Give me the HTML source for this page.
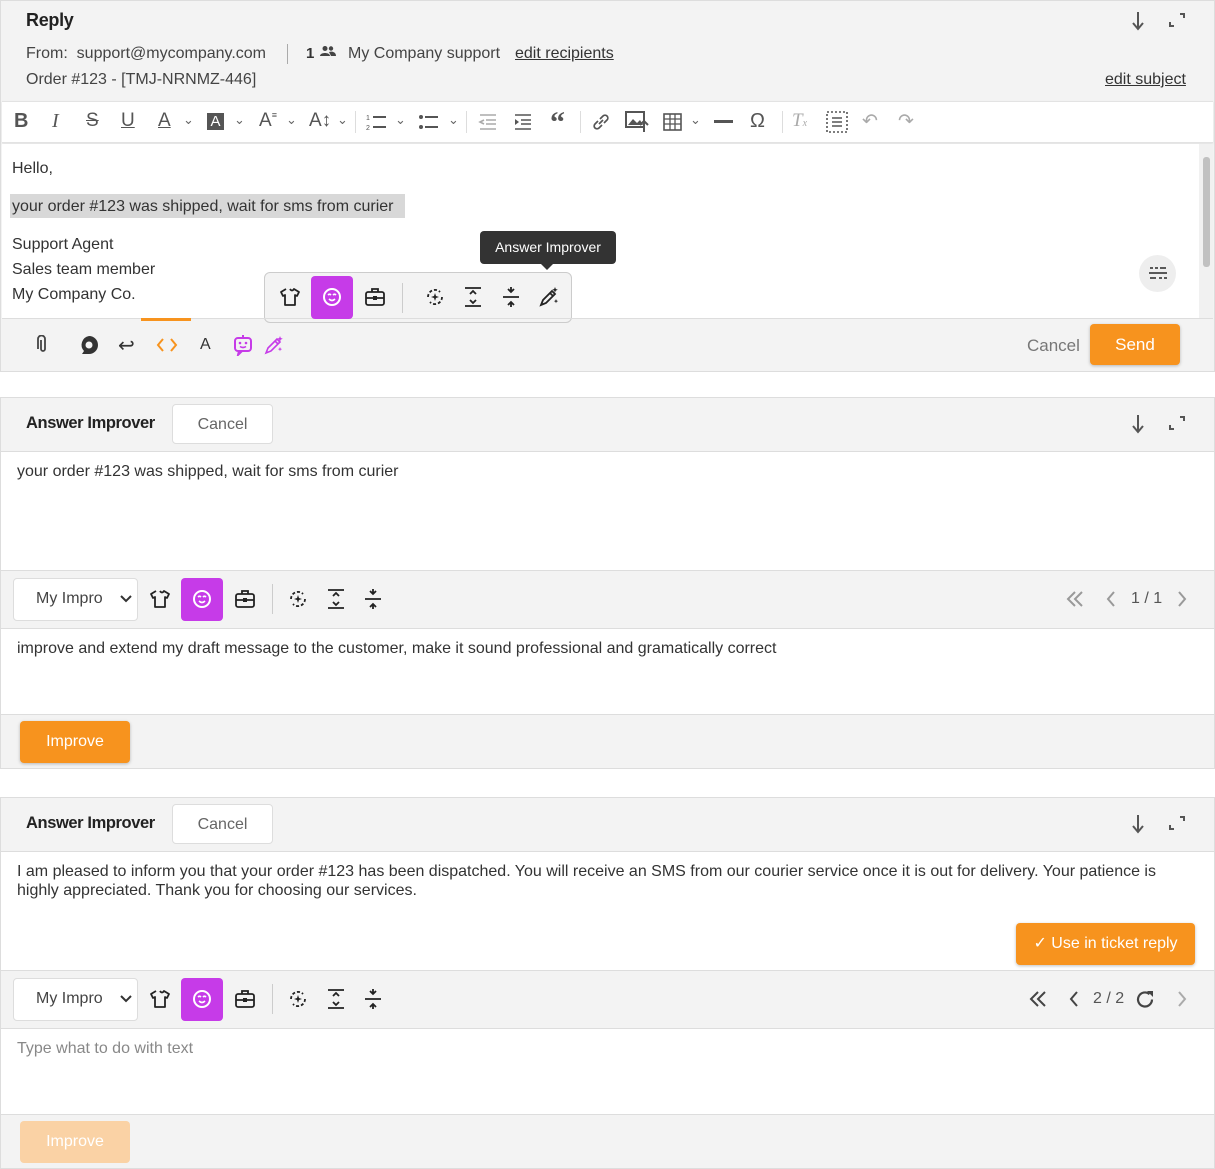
<!DOCTYPE html>
<html><head><meta charset="utf-8"><style>
*{box-sizing:border-box;margin:0;padding:0}
body{width:1215px;height:1169px;background:#fff;font-family:"Liberation Sans",Arial,sans-serif;color:#333;position:relative;overflow:hidden;font-size:16px}
.a{position:absolute}
.g{background:#f3f3f3}
.w{background:#fff}
.t{position:absolute;white-space:nowrap}
.btn{position:absolute;background:#f7931e;color:#fff;border-radius:4px;text-align:center;box-shadow:0 1px 3px rgba(0,0,0,.25)}
.ic{position:absolute}
svg{display:block}
.cb{position:absolute;background:#fff;border:1px solid #ddd;border-radius:4px;color:#666;text-align:center}
.ttl{font-size:16.5px;font-weight:bold;color:#222;letter-spacing:-0.4px}
</style></head><body>

<!-- PANEL 1 -->
<div class="a g" style="left:0;top:0;width:1215px;height:372px;border:1px solid #ddd"></div>
<div class="t" style="left:26px;top:10px;font-size:18px;font-weight:bold;color:#222;letter-spacing:-0.3px">Reply</div>
<div class="t" style="left:26px;top:45px;font-size:16px;color:#444">From:&nbsp; support@mycompany.com</div>
<div class="a" style="left:287px;top:44px;width:1px;height:20px;background:#aaa"></div>
<div class="t" style="left:306px;top:45px;font-size:15px;font-weight:bold;color:#333">1</div>
<svg class="ic" style="left:320px;top:45px" width="16" height="12" viewBox="0 0 16 12"><circle cx="5" cy="3.5" r="2.5" fill="#444"/><circle cx="11" cy="3.5" r="2.2" fill="#444"/><path d="M0 11c0-4 10-4 10 0z M9 7c3-1 7 0 7 4h-5z" fill="#444"/></svg>
<div class="t" style="left:348px;top:45px;font-size:16px;color:#444">My Company support</div>
<div class="t" style="left:515px;top:45px;font-size:16px;color:#333;text-decoration:underline">edit recipients</div>
<div class="t" style="left:26px;top:71px;font-size:16px;color:#444">Order #123 - [TMJ-NRNMZ-446]</div>
<div class="t" style="left:1105px;top:71px;font-size:16px;color:#333;text-decoration:underline">edit subject</div>
<svg class="ic" style="left:1131px;top:11px" width="14" height="20" viewBox="0 0 14 20"><path d="M7 1v16M2 12l5 6 5-6" stroke="#555" stroke-width="2" fill="none"/></svg>
<svg class="ic" style="left:1168px;top:12px" width="18" height="16" viewBox="0 0 18 16"><path d="M12 2h4v4M6 14H2v-4" stroke="#555" stroke-width="2" fill="none"/></svg>

<!-- toolbar -->
<div class="a w" style="left:2px;top:101px;width:1211px;height:42px;border-top:1px solid #e3e3e3;border-bottom:1px solid #e3e3e3;box-shadow:0 1px 2px rgba(0,0,0,.08)"></div>
<div class="t" style="left:14px;top:110px;font-size:20px;font-weight:bold;color:#555">B</div>
<div class="t" style="left:52px;top:110px;font-size:20px;font-style:italic;color:#555;font-family:'Liberation Serif'">I</div>
<div class="t" style="left:86px;top:110px;font-size:19px;color:#555;text-decoration:line-through">S</div>
<div class="t" style="left:121px;top:110px;font-size:19px;color:#555;text-decoration:underline">U</div>
<div class="t" style="left:158px;top:110px;font-size:19px;color:#555;text-decoration:underline">A</div>
<div class="t" style="left:183px;top:112px;font-size:13px;color:#666">⌄</div>
<div class="a" style="left:207px;top:113px;width:17px;height:17px;background:#555;color:#fff;font-size:15px;text-align:center;line-height:17px">A</div>
<div class="t" style="left:234px;top:112px;font-size:13px;color:#666">⌄</div>
<div class="t" style="left:259px;top:110px;font-size:19px;color:#555">A<span style="font-size:9px;vertical-align:top">≡</span></div>
<div class="t" style="left:286px;top:112px;font-size:13px;color:#666">⌄</div>
<div class="t" style="left:309px;top:110px;font-size:19px;color:#555">A↕</div>
<div class="t" style="left:337px;top:112px;font-size:13px;color:#666">⌄</div>
<div class="a" style="left:355px;top:111px;width:1px;height:22px;background:#ddd"></div>
<svg class="ic" style="left:366px;top:112px" width="22" height="20" viewBox="0 0 22 20"><text x="0" y="8" font-size="7" fill="#555">1</text><text x="0" y="18" font-size="7" fill="#555">2</text><path d="M7 5h13M7 15h13" stroke="#555" stroke-width="2"/></svg>
<div class="t" style="left:395px;top:112px;font-size:13px;color:#666">⌄</div>
<svg class="ic" style="left:418px;top:112px" width="22" height="20" viewBox="0 0 22 20"><circle cx="3" cy="5" r="2" fill="#555"/><circle cx="3" cy="15" r="2" fill="#555"/><path d="M7 5h13M7 15h13" stroke="#555" stroke-width="2"/></svg>
<div class="t" style="left:448px;top:112px;font-size:13px;color:#666">⌄</div>
<div class="a" style="left:466px;top:111px;width:1px;height:22px;background:#ddd"></div>
<svg class="ic" style="left:478px;top:112px" width="20" height="20" viewBox="0 0 20 20"><path d="M2 3h16M8 8h10M8 12h10M2 17h16M6 8l-4 2 4 2" stroke="#aaa" stroke-width="1.6" fill="none"/></svg>
<svg class="ic" style="left:513px;top:112px" width="20" height="20" viewBox="0 0 20 20"><path d="M2 3h16M8 8h10M8 12h10M2 17h16" stroke="#555" stroke-width="1.6" fill="none"/><path d="M2 7l4 3-4 3z" fill="#555"/></svg>
<div class="t" style="left:550px;top:106px;font-size:30px;font-weight:bold;color:#555;font-family:'Liberation Serif'">“</div>
<div class="a" style="left:580px;top:111px;width:1px;height:22px;background:#ddd"></div>
<svg class="ic" style="left:591px;top:112px" width="20" height="20" viewBox="0 0 20 20"><path d="M8 12l4-4M7 9l-3 3a2.5 2.5 0 0 0 4 4l3-3M13 11l3-3a2.5 2.5 0 0 0-4-4l-3 3" stroke="#555" stroke-width="1.7" fill="none"/></svg>
<svg class="ic" style="left:625px;top:111px" width="24" height="22" viewBox="0 0 24 22"><rect x="1" y="1" width="18" height="15" fill="none" stroke="#555" stroke-width="2"/><path d="M3 14l5-6 4 4 3-3 3 5z" fill="#555"/><path d="M19 10v11M15 14l4-4 4 4" stroke="#555" stroke-width="2" fill="none"/></svg>
<svg class="ic" style="left:663px;top:112px" width="20" height="20" viewBox="0 0 20 20"><rect x="1" y="2" width="17" height="16" fill="none" stroke="#555" stroke-width="1.6"/><path d="M1 7h17M1 12h17M7 2v16M12 2v16" stroke="#555" stroke-width="1.3"/></svg>
<div class="t" style="left:690px;top:112px;font-size:13px;color:#666">⌄</div>
<div class="a" style="left:714px;top:120px;width:19px;height:3px;background:#555"></div>
<div class="t" style="left:750px;top:110px;font-size:20px;color:#555">Ω</div>
<div class="a" style="left:782px;top:111px;width:1px;height:22px;background:#ddd"></div>
<div class="t" style="left:792px;top:110px;font-size:19px;color:#aaa;font-style:italic;font-family:'Liberation Serif'">T<span style="font-size:10px">x</span></div>
<svg class="ic" style="left:826px;top:111px" width="22" height="22" viewBox="0 0 22 22"><rect x="1" y="1" width="20" height="20" fill="none" stroke="#555" stroke-width="1.6" stroke-dasharray="2 2"/><path d="M6 7h10M6 11h10M6 15h10" stroke="#555" stroke-width="1.6"/></svg>
<div class="t" style="left:862px;top:110px;font-size:19px;color:#aaa">↶</div>
<div class="t" style="left:898px;top:110px;font-size:19px;color:#aaa">↷</div>

<!-- editor -->
<div class="a w" style="left:2px;top:144px;width:1197px;height:174px"></div>
<div class="a" style="left:1199px;top:144px;width:14px;height:174px;background:#f1f1f1"></div>
<div class="a" style="left:1203px;top:157px;width:7px;height:110px;background:#c1c1c1;border-radius:3px"></div>
<div class="t" style="left:12px;top:160px;font-size:16px;color:#333">Hello,</div>
<div class="a" style="left:10px;top:194px;width:395px;height:24px;background:#d8d8d8"></div>
<div class="t" style="left:12px;top:198px;font-size:16px;color:#333">your order #123 was shipped, wait for sms from curier</div>
<div class="t" style="left:12px;top:236px;font-size:16px;color:#333">Support Agent</div>
<div class="t" style="left:12px;top:261px;font-size:16px;color:#333">Sales team member</div>
<div class="t" style="left:12px;top:286px;font-size:16px;color:#333">My Company Co.</div>
<div class="a" style="left:1139px;top:255px;width:37px;height:37px;border-radius:50%;background:#eee"></div>
<svg class="ic" style="left:1147px;top:264px" width="22" height="20" viewBox="0 0 22 20"><path d="M2 9h18M3 4h3M8 4h3M13 4h6M3 14h6M12 14h3M17 14h3" stroke="#444" stroke-width="1.8"/></svg>

<!-- tooltip -->
<div class="a" style="left:480px;top:231px;width:136px;height:33px;background:#333;border-radius:4px;color:#fff;font-size:14px;text-align:center;line-height:32px">Answer Improver</div>
<div class="a" style="left:540px;top:263px;width:0;height:0;border-left:7px solid transparent;border-right:7px solid transparent;border-top:7px solid #333"></div>
<div class="a" style="left:264px;top:272px;width:308px;height:51px;background:#f3f3f3;border:1px solid #ccc;border-radius:6px"></div>

<!-- bottom bar -->
<div class="a" style="left:2px;top:318px;width:1211px;height:1px;background:#ddd"></div>
<div class="a" style="left:141px;top:318px;width:50px;height:3px;background:#f7931e"></div>
<svg class="ic" style="left:37px;top:335px" width="12" height="20" viewBox="0 0 12 20"><path d="M4 5v9a2 2 0 0 0 4 0V4a3.5 3.5 0 0 0-7 0v10" stroke="#444" stroke-width="1.8" fill="none"/></svg>
<svg class="ic" style="left:79px;top:335px" width="20" height="21" viewBox="0 0 20 21"><path d="M10 1a9 9 0 0 1 0 18H3l2-3A9 9 0 0 1 10 1z" fill="#333"/><circle cx="10" cy="10" r="3.5" fill="#f3f3f3"/></svg>
<div class="t" style="left:118px;top:333px;font-size:20px;color:#333">↩</div>
<svg class="ic" style="left:156px;top:337px" width="22" height="16" viewBox="0 0 22 16"><path d="M7 2L2 8l5 6M15 2l5 6-5 6" stroke="#f7931e" stroke-width="2" fill="none"/></svg>
<div class="t" style="left:200px;top:336px;font-size:16px;color:#333">A</div>
<svg class="ic" style="left:233px;top:334px" width="20" height="22" viewBox="0 0 20 22"><rect x="2" y="4" width="16" height="13" rx="3" fill="none" stroke="#c63be8" stroke-width="2"/><path d="M10 1v3M6 17l-1 4 4-4" stroke="#c63be8" stroke-width="2" fill="none"/><circle cx="7" cy="9" r="1.3" fill="#c63be8"/><circle cx="13" cy="9" r="1.3" fill="#c63be8"/><path d="M7 12.5q3 2 6 0" stroke="#c63be8" stroke-width="1.6" fill="none"/></svg>
<svg class="ic" style="left:264px;top:335px" width="20" height="20" viewBox="0 0 20 20"><path d="M2 18l2-5 9-9 3 3-9 9z M11 6l3 3" stroke="#c63be8" stroke-width="1.6" fill="none"/><path d="M16 1l.8 2 2 .8-2 .8-.8 2-.8-2-2-.8 2-.8z M16 12l.6 1.5 1.5.6-1.5.6-.6 1.5-.6-1.5-1.5-.6 1.5-.6z" fill="#c63be8"/></svg>
<div class="t" style="left:1027px;top:336px;font-size:17px;color:#777">Cancel</div>
<div class="btn" style="left:1090px;top:324px;width:90px;height:41px;line-height:41px;font-size:17px">Send</div>

<!-- PANEL 2 -->
<div class="a g" style="left:0;top:397px;width:1215px;height:372px;border:1px solid #ddd"></div>
<div class="t ttl" style="left:26px;top:414px">Answer Improver</div>
<div class="cb" style="left:172px;top:404px;width:101px;height:40px;line-height:39px;font-size:16px">Cancel</div>
<svg class="ic" style="left:1131px;top:414px" width="14" height="20" viewBox="0 0 14 20"><path d="M7 1v16M2 12l5 6 5-6" stroke="#555" stroke-width="2" fill="none"/></svg>
<svg class="ic" style="left:1168px;top:415px" width="18" height="16" viewBox="0 0 18 16"><path d="M12 2h4v4M6 14H2v-4" stroke="#555" stroke-width="2" fill="none"/></svg>
<div class="a w" style="left:1px;top:451px;width:1213px;height:120px;border-top:1px solid #ddd;border-bottom:1px solid #ddd"></div>
<div class="t" style="left:17px;top:463px;font-size:16px;color:#333">your order #123 was shipped, wait for sms from curier</div>
<div class="a w" style="left:1px;top:628px;width:1213px;height:87px;border-top:1px solid #ddd;border-bottom:1px solid #ddd"></div>
<div class="t" style="left:17px;top:640px;font-size:16px;color:#333">improve and extend my draft message to the customer, make it sound professional and gramatically correct</div>
<div class="btn" style="left:20px;top:721px;width:110px;height:42px;line-height:42px;font-size:16px">Improve</div>

<!-- PANEL 3 -->
<div class="a g" style="left:0;top:797px;width:1215px;height:372px;border:1px solid #ddd"></div>
<div class="t ttl" style="left:26px;top:814px">Answer Improver</div>
<div class="cb" style="left:172px;top:804px;width:101px;height:40px;line-height:39px;font-size:16px">Cancel</div>
<svg class="ic" style="left:1131px;top:814px" width="14" height="20" viewBox="0 0 14 20"><path d="M7 1v16M2 12l5 6 5-6" stroke="#555" stroke-width="2" fill="none"/></svg>
<svg class="ic" style="left:1168px;top:815px" width="18" height="16" viewBox="0 0 18 16"><path d="M12 2h4v4M6 14H2v-4" stroke="#555" stroke-width="2" fill="none"/></svg>
<div class="a w" style="left:1px;top:851px;width:1213px;height:120px;border-top:1px solid #ddd;border-bottom:1px solid #ddd"></div>
<div class="a" style="left:17px;top:862px;width:1180px;font-size:16px;line-height:19px;color:#333">I am pleased to inform you that your order #123 has been dispatched. You will receive an SMS from our courier service once it is out for delivery. Your patience is highly appreciated. Thank you for choosing our services.</div>
<div class="btn" style="left:1016px;top:923px;width:179px;height:42px;line-height:42px;font-size:16px">✓ Use in ticket reply</div>
<div class="a w" style="left:1px;top:1028px;width:1213px;height:87px;border-top:1px solid #ddd;border-bottom:1px solid #ddd"></div>
<div class="t" style="left:17px;top:1040px;font-size:16px;color:#888">Type what to do with text</div>
<div class="btn" style="left:20px;top:1121px;width:110px;height:42px;line-height:42px;font-size:16px;background:#fad2a5;box-shadow:none">Improve</div>

<!-- pager p2 -->
<svg class="ic" style="left:1066px;top:590px" width="18" height="18" viewBox="0 0 18 18"><path d="M9 2L2 9l7 7M16 2L9 9l7 7" stroke="#999" stroke-width="2" fill="none"/></svg>
<svg class="ic" style="left:1106px;top:590px" width="10" height="18" viewBox="0 0 10 18"><path d="M8 2L2 9l6 7" stroke="#999" stroke-width="2" fill="none"/></svg>
<div class="t" style="left:1131px;top:590px;font-size:16px;color:#555">1 / 1</div>
<svg class="ic" style="left:1177px;top:590px" width="10" height="18" viewBox="0 0 10 18"><path d="M2 2l6 7-6 7" stroke="#999" stroke-width="2" fill="none"/></svg>
<!-- pager p3 -->
<svg class="ic" style="left:1029px;top:990px" width="18" height="18" viewBox="0 0 18 18"><path d="M9 2L2 9l7 7M16 2L9 9l7 7" stroke="#444" stroke-width="2" fill="none"/></svg>
<svg class="ic" style="left:1069px;top:990px" width="10" height="18" viewBox="0 0 10 18"><path d="M8 2L2 9l6 7" stroke="#444" stroke-width="2" fill="none"/></svg>
<div class="t" style="left:1093px;top:990px;font-size:16px;color:#555">2 / 2</div>
<svg class="ic" style="left:1135px;top:989px" width="21" height="21" viewBox="0 0 21 21"><path d="M17 10.5a7 7 0 1 1-2.5-5.4" stroke="#444" stroke-width="2.2" fill="none"/><path d="M12 2h6v6z" fill="#444"/></svg>
<svg class="ic" style="left:1177px;top:990px" width="10" height="18" viewBox="0 0 10 18"><path d="M2 2l6 7-6 7" stroke="#aaa" stroke-width="2" fill="none"/></svg>

<!-- selects -->
<div class="a w" style="left:13px;top:578px;width:125px;height:43px;border:1px solid #ddd;border-radius:4px"></div>
<div class="t" style="left:36px;top:590px;font-size:16px;color:#444">My Impro</div>
<div class="a w" style="left:102px;top:582px;width:12px;height:35px"></div>
<svg class="ic" style="left:120px;top:595px" width="12" height="9" viewBox="0 0 12 9"><path d="M1 1l5 5 5-5" stroke="#333" stroke-width="2" fill="none"/></svg>
<div class="a w" style="left:13px;top:978px;width:125px;height:43px;border:1px solid #ddd;border-radius:4px"></div>
<div class="t" style="left:36px;top:990px;font-size:16px;color:#444">My Impro</div>
<div class="a w" style="left:102px;top:982px;width:12px;height:35px"></div>
<svg class="ic" style="left:120px;top:995px" width="12" height="9" viewBox="0 0 12 9"><path d="M1 1l5 5 5-5" stroke="#333" stroke-width="2" fill="none"/></svg>

<div class="a" style="left:311px;top:276px;width:42px;height:43px;background:#c63be8;border-radius:4px"></div>
<div class="a" style="left:181px;top:578px;width:42px;height:43px;background:#c63be8;border-radius:4px"></div>
<div class="a" style="left:181px;top:978px;width:42px;height:43px;background:#c63be8;border-radius:4px"></div>
<div class="a" style="left:402px;top:283px;width:1px;height:30px;background:#ccc"></div>
<div class="a" style="left:272px;top:584px;width:1px;height:30px;background:#ccc"></div>
<div class="a" style="left:272px;top:984px;width:1px;height:30px;background:#ccc"></div>

<svg width="0" height="0" style="position:absolute"><defs>
<g id="shirt"><path d="M7 2L2 5l2 4 2-1v10h10V8l2 1 2-4-5-3q-2 3-4 0" stroke="#222" stroke-width="1.8" fill="none" stroke-linejoin="round"/></g>
<g id="smile"><circle cx="11" cy="11" r="8" stroke="#fff" stroke-width="2" fill="none"/><path d="M7 9q1.5-1.5 3 0M12 9q1.5-1.5 3 0M8 13q3 3 6 0" stroke="#fff" stroke-width="1.6" fill="none"/></g>
<g id="brief"><rect x="2" y="6" width="18" height="13" rx="2" stroke="#222" stroke-width="1.8" fill="none"/><path d="M8 6V3h6v3M2 12h18" stroke="#222" stroke-width="1.8" fill="none"/><rect x="9" y="10" width="4" height="4" fill="#222"/></g>
<g id="rot"><path d="M4 11a7 7 0 0 1 12-5M18 11a7 7 0 0 1-12 5" stroke="#222" stroke-width="1.8" fill="none" stroke-dasharray="3 2"/><path d="M11 7l1 3 3 1-3 1-1 3-1-3-3-1 3-1z" fill="#222"/></g>
<g id="exp"><path d="M3 2h16M3 20h16M8 8l3-3 3 3M8 14l3 3 3-3" stroke="#222" stroke-width="1.8" fill="none"/></g>
<g id="col"><path d="M3 11h16M8 3l3 3 3-3M8 19l3-3 3 3M11 1v5M11 16v5" stroke="#222" stroke-width="1.8" fill="none"/></g>
<g id="wand"><path d="M3 19l2-5 9-9 3 3-9 9z M12 7l3 3" stroke="#222" stroke-width="1.8" fill="none"/><path d="M17 1l.8 2 2 .8-2 .8-.8 2-.8-2-2-.8 2-.8z M18 13l.6 1.5 1.5.6-1.5.6-.6 1.5-.6-1.5-1.5-.6 1.5-.6z" fill="#222"/></g>
</defs></svg>

<svg class="ic" style="left:279px;top:287px" width="22" height="22"><use href="#shirt"/></svg>
<svg class="ic" style="left:321px;top:286px" width="22" height="22"><use href="#smile"/></svg>
<svg class="ic" style="left:364px;top:286px" width="22" height="22"><use href="#brief"/></svg>
<svg class="ic" style="left:424px;top:286px" width="22" height="22"><use href="#rot"/></svg>
<svg class="ic" style="left:462px;top:286px" width="22" height="22"><use href="#exp"/></svg>
<svg class="ic" style="left:500px;top:286px" width="22" height="22"><use href="#col"/></svg>
<svg class="ic" style="left:538px;top:286px" width="22" height="22"><use href="#wand"/></svg>

<svg class="ic" style="left:149px;top:589px" width="22" height="22"><use href="#shirt"/></svg>
<svg class="ic" style="left:191px;top:588px" width="22" height="22"><use href="#smile"/></svg>
<svg class="ic" style="left:234px;top:588px" width="22" height="22"><use href="#brief"/></svg>
<svg class="ic" style="left:287px;top:588px" width="22" height="22"><use href="#rot"/></svg>
<svg class="ic" style="left:325px;top:588px" width="22" height="22"><use href="#exp"/></svg>
<svg class="ic" style="left:362px;top:588px" width="22" height="22"><use href="#col"/></svg>

<svg class="ic" style="left:149px;top:989px" width="22" height="22"><use href="#shirt"/></svg>
<svg class="ic" style="left:191px;top:988px" width="22" height="22"><use href="#smile"/></svg>
<svg class="ic" style="left:234px;top:988px" width="22" height="22"><use href="#brief"/></svg>
<svg class="ic" style="left:287px;top:988px" width="22" height="22"><use href="#rot"/></svg>
<svg class="ic" style="left:325px;top:988px" width="22" height="22"><use href="#exp"/></svg>
<svg class="ic" style="left:362px;top:988px" width="22" height="22"><use href="#col"/></svg>
</body></html>
